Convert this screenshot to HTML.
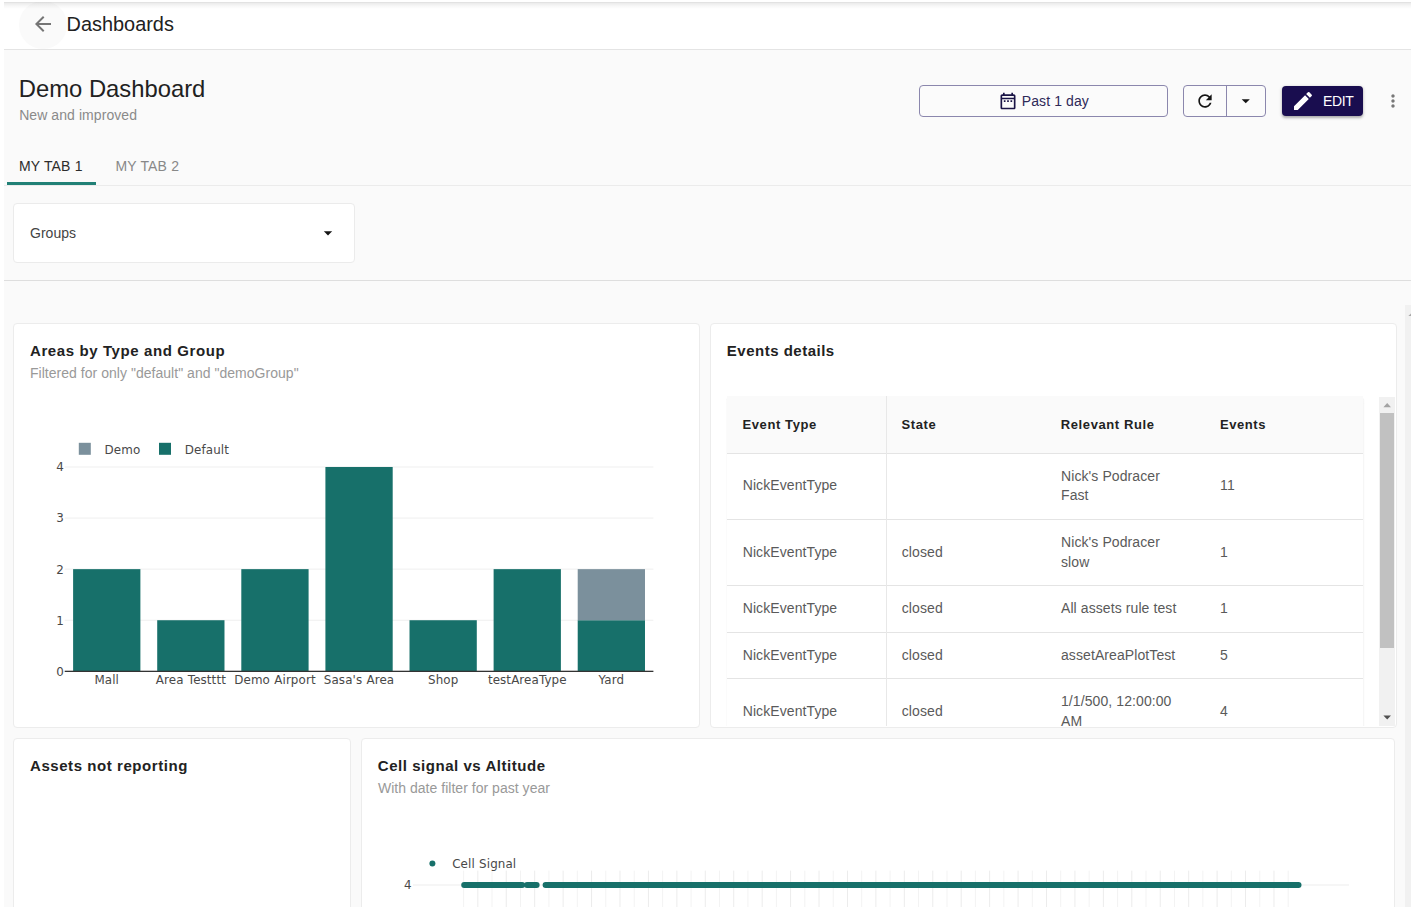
<!DOCTYPE html>
<html lang="en">
<head>
<meta charset="utf-8">
<title>Demo Dashboard</title>
<style>
html,body{margin:0;padding:0;background:#fff;}
body{width:1414px;height:913px;position:relative;overflow:hidden;font-family:"Liberation Sans",Arial,Helvetica,sans-serif;font-size:14px;color:#212121;}
.abs{position:absolute;}
.t{position:absolute;white-space:nowrap;line-height:20px;}
#page{position:absolute;left:4px;top:2px;width:1407px;height:905px;background:#fafafa;overflow:hidden;}
#hdr{position:absolute;left:0;top:0;width:1407px;height:46.6px;background:#fff;border-bottom:1px solid #e4e4e4;overflow:hidden;}
#hdr .shadow{position:absolute;left:0;top:0;width:100%;height:7px;background:linear-gradient(rgba(0,0,0,.137) 0px,rgba(0,0,0,.07) 1.5px,rgba(0,0,0,.03) 4px,rgba(0,0,0,0) 7px);}
.card{position:absolute;background:#fff;border:1px solid #ececec;border-radius:4px;box-sizing:border-box;}
.title{font-weight:700;font-size:15px;letter-spacing:.6px;color:#222;}
.sub{font-size:14px;letter-spacing:.03px;color:#999;}
.btn{position:absolute;box-sizing:border-box;border:1px solid #8b87ad;border-radius:4px;background:#fbfbfb;}
svg{position:absolute;overflow:visible;}
.chart text{font-family:"DejaVu Sans",Verdana,"Liberation Sans",sans-serif;font-size:11.9px;letter-spacing:.1px;word-spacing:.4px;fill:#484848;}

.th{font-weight:700;font-size:13px;letter-spacing:.6px;color:#222;}
.row{box-sizing:border-box;}
.hl{position:absolute;left:0;width:636.6px;height:1px;background:#e4e4e4;}
.td{position:absolute;top:0;display:flex;align-items:center;font-size:14px;line-height:19.8px;letter-spacing:.09px;color:#5a5a5a;}
</style>
</head>
<body>
<div id="page">
  <!-- top bar -->
  <div id="hdr">
    <div class="abs" style="left:14.5px;top:-1.5px;width:48px;height:48px;border-radius:50%;background:#fafafa;"></div>
    <div class="shadow"></div>
    <svg style="left:27px;top:10px" width="24" height="24" viewBox="0 0 24 24"><path d="M20 11H7.83l5.59-5.59L12 4l-8 8 8 8 1.41-1.41L7.83 13H20v-2z" fill="#757575"/></svg>
    <div class="t" style="left:62.6px;top:11.6px;font-size:19.9px;color:#212121;">Dashboards</div>
  </div>

  <!-- dashboard heading -->
  <div class="t" style="left:14.8px;top:72.5px;font-size:23.8px;line-height:28px;color:#212121;">Demo Dashboard</div>
  <div class="t" style="left:15.2px;top:102.7px;font-size:14px;letter-spacing:.07px;color:#8a8a8a;">New and improved</div>

  <!-- toolbar -->
  <div class="btn" style="left:915px;top:83px;width:249px;height:32px;"></div>
  <svg style="left:993.6px;top:88.8px" width="20" height="20" viewBox="0 0 24 24"><path fill="#1a1446" d="M19 4h-1V2h-2v2H8V2H6v2H5c-1.11 0-1.99.9-1.99 2L3 20c0 1.1.89 2 2 2h14c1.1 0 2-.9 2-2V6c0-1.1-.9-2-2-2zm0 16H5V10h14v10zm0-12H5V6h14v2zM7 11.2h2v2H7zm4 0h2v2h-2zm4 0h2v2h-2z"/></svg>
  <div class="t" style="left:1017.8px;top:89px;letter-spacing:.1px;color:#2e2958;">Past 1 day</div>

  <div class="btn" style="left:1179px;top:83px;width:83px;height:32px;"></div>
  <div class="abs" style="left:1221.5px;top:84px;width:1px;height:30px;background:#8b87ad;"></div>
  <svg style="left:1191.4px;top:89px" width="20" height="20" viewBox="0 0 24 24"><path fill="#151515" d="M17.65 6.35C16.2 4.9 14.21 4 12 4c-4.42 0-7.99 3.58-7.99 8s3.57 8 7.99 8c3.73 0 6.84-2.55 7.73-6h-2.08c-.82 2.33-3.04 4-5.65 4-3.31 0-6-2.69-6-6s2.69-6 6-6c1.66 0 3.14.69 4.22 1.78L13 11h7V4l-2.35 2.35z"/></svg>
  <svg style="left:1232.2px;top:88.9px" width="19.5" height="19.5" viewBox="0 0 24 24"><path fill="#151515" d="M7 10l5 5 5-5z"/></svg>

  <div class="abs" style="left:1277.7px;top:83.5px;width:81.8px;height:30.9px;border-radius:4px;background:#190d4f;box-shadow:0 1.5px 2.5px rgba(0,0,0,.25),0 1px 4px rgba(0,0,0,.12);"></div>
  <svg style="left:1287.4px;top:87px" width="24" height="24" viewBox="0 0 24 24"><path fill="#fff" d="M3 17.25V21h3.75L17.81 9.94l-3.75-3.75L3 17.25zM20.71 7.04c.39-.39.39-1.02 0-1.41l-2.34-2.34a.9959.9959 0 0 0-1.41 0l-1.83 1.83 3.75 3.75 1.83-1.83z"/></svg>
  <div class="t" style="left:1318.9px;top:89px;letter-spacing:-.35px;color:#fff;">EDIT</div>

  <svg style="left:1379px;top:89px" width="20" height="20" viewBox="0 0 24 24"><path fill="#777" d="M12 8c1.1 0 2-.9 2-2s-.9-2-2-2-2 .9-2 2 .9 2 2 2zm0 2c-1.100 0-2 .9-2 2s.9 2 2 2 2-.9 2-2-.9-2-2-2zm0 6c-1.100 0-2 .9-2 2s.9 2 2 2 2-.9 2-2-.9-2-2-2z"/></svg>

  <!-- tabs -->
  <div class="t" style="left:15px;top:154.2px;color:#2c2c2c;letter-spacing:.17px;">MY TAB 1</div>
  <div class="t" style="left:111.5px;top:154.2px;color:#888;letter-spacing:.17px;">MY TAB 2</div>
  <div class="abs" style="left:0;top:182.6px;width:1407px;height:1px;background:#ebebeb;"></div>
  <div class="abs" style="left:3px;top:180.3px;width:88.6px;height:2.6px;background:#218076;"></div>

  <!-- filters -->
  <div class="card" style="left:9px;top:201px;width:342.4px;height:59.5px;border-color:#ebebeb;"></div>
  <div class="t" style="left:26px;top:220.65px;letter-spacing:.03px;color:#444;">Groups</div>
  <svg style="left:314px;top:220.8px" width="20" height="20" viewBox="0 0 24 24"><path fill="#151515" d="M7 10l5 5 5-5z"/></svg>
  <div class="abs" style="left:0;top:278.4px;width:1407px;height:1px;background:#dedede;"></div>

  <!-- page scrollbar -->
  <div class="abs" style="left:1401px;top:303.3px;width:6px;height:602px;background:#f1f1f1;"></div>
  <svg style="left:1401px;top:303px" width="6" height="20" viewBox="0 0 6 20"><path d="M3.4 11.1 L6 8.4 L6 11.1Z" fill="#a8a8a8"/></svg>

  <!-- CARD 1 -->
  <div class="card" id="c1" style="left:9px;top:321px;width:687px;height:405px;"></div>
  
  <div class="t title" style="left:26px;top:339.2px;">Areas by Type and Group</div>
  <div class="t sub" style="left:26px;top:361.2px;">Filtered for only "default" and "demoGroup"</div>
  <svg class="chart" style="left:-4px;top:-2px" width="1414" height="913" viewBox="0 0 1414 913">
  <rect x="64.7" y="619.72" width="588.7" height="1" fill="#efefef"/>
  <rect x="64.7" y="568.64" width="588.7" height="1" fill="#efefef"/>
  <rect x="64.7" y="517.56" width="588.7" height="1" fill="#efefef"/>
  <rect x="64.7" y="466.48" width="588.7" height="1" fill="#efefef"/>
  <rect x="73.11" y="569.14" width="67.28" height="102.16" fill="#17706a"/>
  <text x="106.75" y="683.8" text-anchor="middle">Mall</text>
  <rect x="157.21" y="620.22" width="67.28" height="51.08" fill="#17706a"/>
  <text x="190.85" y="683.8" text-anchor="middle">Area Testttt</text>
  <rect x="241.31" y="569.14" width="67.28" height="102.16" fill="#17706a"/>
  <text x="274.95" y="683.8" text-anchor="middle">Demo Airport</text>
  <rect x="325.41" y="466.98" width="67.28" height="204.32" fill="#17706a"/>
  <text x="359.05" y="683.8" text-anchor="middle">Sasa&#39;s Area</text>
  <rect x="409.51" y="620.22" width="67.28" height="51.08" fill="#17706a"/>
  <text x="443.15" y="683.8" text-anchor="middle">Shop</text>
  <rect x="493.61" y="569.14" width="67.28" height="102.16" fill="#17706a"/>
  <text x="527.25" y="683.8" text-anchor="middle">testAreaType</text>
  <rect x="577.71" y="620.22" width="67.28" height="51.08" fill="#17706a"/>
  <rect x="577.71" y="569.14" width="67.28" height="51.08" fill="#7b909c"/>
  <text x="611.35" y="683.8" text-anchor="middle">Yard</text>
  <rect x="64.7" y="670.70" width="588.7" height="1.3" fill="#333"/>
  <text x="63.8" y="675.70" text-anchor="end">0</text>
  <text x="63.8" y="624.62" text-anchor="end">1</text>
  <text x="63.8" y="573.54" text-anchor="end">2</text>
  <text x="63.8" y="522.46" text-anchor="end">3</text>
  <text x="63.8" y="471.38" text-anchor="end">4</text>
  <rect x="78.8" y="442.8" width="12" height="12" fill="#7b909c"/>
  <text x="104.6" y="453.5">Demo</text>
  <rect x="159" y="442.8" width="12" height="12" fill="#17706a"/>
  <text x="184.8" y="453.5">Default</text>
  </svg>
  <!-- CARD 2 -->
  <div class="card" id="c2" style="left:706px;top:321px;width:687px;height:405px;"></div>
  <div class="t title" style="left:722.8px;top:339.2px;letter-spacing:.5px;">Events details</div>
  <div id="tblclip" class="abs" style="left:708px;top:388.4px;width:684px;height:336.0px;overflow:hidden;">
  <div id="tbl" class="abs" style="left:14.7px;top:6.0px;width:636.6px;height:400px;background:#fff;box-shadow:0 2px 1px -1px rgba(0,0,0,.18),0 1.5px 1px 0 rgba(0,0,0,.12),0 2px 3px -0.5px rgba(0,0,0,.12);">
  <div class="abs" style="left:0;top:0;width:636.6px;height:56.8px;background:#fafafa;"></div>
  <div class="t th" style="left:15.8px;top:18.2px;">Event Type</div>
  <div class="t th" style="left:174.9px;top:18.2px;">State</div>
  <div class="t th" style="left:334.1px;top:18.2px;">Relevant Rule</div>
  <div class="t th" style="left:493.2px;top:18.2px;">Events</div>
  <div class="abs row" style="left:0;top:56.6px;width:636.6px;height:66.8px;">
  <div class="td" style="left:16.0px;width:127.1px;height:66.8px;"><span>NickEventType</span></div>
  <div class="td" style="left:334.3px;width:127.1px;height:66.8px;"><span>Nick's Podracer<br>Fast</span></div>
  <div class="td" style="left:493.4px;width:127.1px;height:66.8px;"><span>11</span></div>
  </div>
  <div class="abs row" style="left:0;top:123.4px;width:636.6px;height:65.7px;">
  <div class="td" style="left:16.0px;width:127.1px;height:65.7px;"><span>NickEventType</span></div>
  <div class="td" style="left:175.1px;width:127.1px;height:65.7px;"><span>closed</span></div>
  <div class="td" style="left:334.3px;width:127.1px;height:65.7px;"><span>Nick's Podracer<br>slow</span></div>
  <div class="td" style="left:493.4px;width:127.1px;height:65.7px;"><span>1</span></div>
  </div>
  <div class="abs row" style="left:0;top:189.1px;width:636.6px;height:46.8px;">
  <div class="td" style="left:16.0px;width:127.1px;height:46.8px;"><span>NickEventType</span></div>
  <div class="td" style="left:175.1px;width:127.1px;height:46.8px;"><span>closed</span></div>
  <div class="td" style="left:334.3px;width:127.1px;height:46.8px;"><span>All assets rule test</span></div>
  <div class="td" style="left:493.4px;width:127.1px;height:46.8px;"><span>1</span></div>
  </div>
  <div class="abs row" style="left:0;top:235.9px;width:636.6px;height:46.3px;">
  <div class="td" style="left:16.0px;width:127.1px;height:46.3px;"><span>NickEventType</span></div>
  <div class="td" style="left:175.1px;width:127.1px;height:46.3px;"><span>closed</span></div>
  <div class="td" style="left:334.3px;width:127.1px;height:46.3px;"><span>assetAreaPlotTest</span></div>
  <div class="td" style="left:493.4px;width:127.1px;height:46.3px;"><span>5</span></div>
  </div>
  <div class="abs row" style="left:0;top:282.2px;width:636.6px;height:66.4px;">
  <div class="td" style="left:16.0px;width:127.1px;height:66.4px;"><span>NickEventType</span></div>
  <div class="td" style="left:175.1px;width:127.1px;height:66.4px;"><span>closed</span></div>
  <div class="td" style="left:334.3px;width:127.1px;height:66.4px;"><span>1/1/500, 12:00:00<br>AM</span></div>
  <div class="td" style="left:493.4px;width:127.1px;height:66.4px;"><span>4</span></div>
  </div>
  <div class="hl" style="top:56.5px;"></div>
  <div class="hl" style="top:122.4px;"></div>
  <div class="hl" style="top:188.9px;"></div>
  <div class="hl" style="top:235.4px;"></div>
  <div class="hl" style="top:281.7px;"></div>
  <div class="abs" style="left:158.9px;top:0;width:1px;height:400px;background:#e8e8e8;"></div>
  </div>
  <div class="abs" style="left:666.7px;top:6.6px;width:16.2px;height:340px;background:#f1f1f1;"></div>
  <div class="abs" style="left:668.3px;top:22.6px;width:13.6px;height:234.8px;background:#c1c1c1;"></div>
  <svg style="left:666.7px;top:6.6px" width="16" height="340" viewBox="0 0 16 340"><path d="M4.4 10.2 L8.2 6 L12 10.2Z" fill="#a3a3a3"/><path d="M4.4 318.4 L12 318.4 L8.2 322.6Z" fill="#505050"/></svg>
  </div>
  <!-- CARD 3 -->
  <div class="card" id="c3" style="left:9px;top:736px;width:337.8px;height:200px;"></div>
  <!-- CARD 4 -->
  <div class="card" id="c4" style="left:357px;top:736px;width:1034px;height:200px;"></div>

  <div class="t title" style="left:26px;top:753.9px;letter-spacing:.56px;">Assets not reporting</div>
  <div class="t title" style="left:373.8px;top:753.9px;letter-spacing:.54px;">Cell signal vs Altitude</div>
  <div class="t sub" style="left:373.9px;top:776.3px;">With date filter for past year</div>
  <svg class="chart" style="left:-4px;top:-2px" width="1414" height="913" viewBox="0 0 1414 913">
  <rect x="463.10" y="870.6" width="1" height="40" fill="#f3f3f3"/>
  <rect x="477.32" y="870.6" width="1" height="40" fill="#ececec"/>
  <rect x="491.53" y="870.6" width="1" height="40" fill="#f3f3f3"/>
  <rect x="505.75" y="870.6" width="1" height="40" fill="#ececec"/>
  <rect x="519.97" y="870.6" width="1" height="40" fill="#f3f3f3"/>
  <rect x="534.19" y="870.6" width="1" height="40" fill="#ececec"/>
  <rect x="548.40" y="870.6" width="1" height="40" fill="#f3f3f3"/>
  <rect x="562.62" y="870.6" width="1" height="40" fill="#ececec"/>
  <rect x="576.84" y="870.6" width="1" height="40" fill="#f3f3f3"/>
  <rect x="591.05" y="870.6" width="1" height="40" fill="#ececec"/>
  <rect x="605.27" y="870.6" width="1" height="40" fill="#f3f3f3"/>
  <rect x="619.49" y="870.6" width="1" height="40" fill="#ececec"/>
  <rect x="633.70" y="870.6" width="1" height="40" fill="#f3f3f3"/>
  <rect x="647.92" y="870.6" width="1" height="40" fill="#ececec"/>
  <rect x="662.14" y="870.6" width="1" height="40" fill="#f3f3f3"/>
  <rect x="676.36" y="870.6" width="1" height="40" fill="#ececec"/>
  <rect x="690.57" y="870.6" width="1" height="40" fill="#f3f3f3"/>
  <rect x="704.79" y="870.6" width="1" height="40" fill="#ececec"/>
  <rect x="719.01" y="870.6" width="1" height="40" fill="#f3f3f3"/>
  <rect x="733.22" y="870.6" width="1" height="40" fill="#ececec"/>
  <rect x="747.44" y="870.6" width="1" height="40" fill="#f3f3f3"/>
  <rect x="761.66" y="870.6" width="1" height="40" fill="#ececec"/>
  <rect x="775.87" y="870.6" width="1" height="40" fill="#f3f3f3"/>
  <rect x="790.09" y="870.6" width="1" height="40" fill="#ececec"/>
  <rect x="804.31" y="870.6" width="1" height="40" fill="#f3f3f3"/>
  <rect x="818.53" y="870.6" width="1" height="40" fill="#ececec"/>
  <rect x="832.74" y="870.6" width="1" height="40" fill="#f3f3f3"/>
  <rect x="846.96" y="870.6" width="1" height="40" fill="#ececec"/>
  <rect x="861.18" y="870.6" width="1" height="40" fill="#f3f3f3"/>
  <rect x="875.39" y="870.6" width="1" height="40" fill="#ececec"/>
  <rect x="889.61" y="870.6" width="1" height="40" fill="#f3f3f3"/>
  <rect x="903.83" y="870.6" width="1" height="40" fill="#ececec"/>
  <rect x="918.04" y="870.6" width="1" height="40" fill="#f3f3f3"/>
  <rect x="932.26" y="870.6" width="1" height="40" fill="#ececec"/>
  <rect x="946.48" y="870.6" width="1" height="40" fill="#f3f3f3"/>
  <rect x="960.70" y="870.6" width="1" height="40" fill="#ececec"/>
  <rect x="974.91" y="870.6" width="1" height="40" fill="#f3f3f3"/>
  <rect x="989.13" y="870.6" width="1" height="40" fill="#ececec"/>
  <rect x="1003.35" y="870.6" width="1" height="40" fill="#f3f3f3"/>
  <rect x="1017.56" y="870.6" width="1" height="40" fill="#ececec"/>
  <rect x="1031.78" y="870.6" width="1" height="40" fill="#f3f3f3"/>
  <rect x="1046.00" y="870.6" width="1" height="40" fill="#ececec"/>
  <rect x="1060.21" y="870.6" width="1" height="40" fill="#f3f3f3"/>
  <rect x="1074.43" y="870.6" width="1" height="40" fill="#ececec"/>
  <rect x="1088.65" y="870.6" width="1" height="40" fill="#f3f3f3"/>
  <rect x="1102.87" y="870.6" width="1" height="40" fill="#ececec"/>
  <rect x="1117.08" y="870.6" width="1" height="40" fill="#f3f3f3"/>
  <rect x="1131.30" y="870.6" width="1" height="40" fill="#ececec"/>
  <rect x="1145.52" y="870.6" width="1" height="40" fill="#f3f3f3"/>
  <rect x="1159.73" y="870.6" width="1" height="40" fill="#ececec"/>
  <rect x="1173.95" y="870.6" width="1" height="40" fill="#f3f3f3"/>
  <rect x="1188.17" y="870.6" width="1" height="40" fill="#ececec"/>
  <rect x="1202.38" y="870.6" width="1" height="40" fill="#f3f3f3"/>
  <rect x="1216.60" y="870.6" width="1" height="40" fill="#ececec"/>
  <rect x="1230.82" y="870.6" width="1" height="40" fill="#f3f3f3"/>
  <rect x="1245.04" y="870.6" width="1" height="40" fill="#ececec"/>
  <rect x="1259.25" y="870.6" width="1" height="40" fill="#f3f3f3"/>
  <rect x="1273.47" y="870.6" width="1" height="40" fill="#ececec"/>
  <rect x="1287.69" y="870.6" width="1" height="40" fill="#f3f3f3"/>
  <rect x="413" y="884.5" width="936" height="1" fill="#eee"/>
  <line x1="464.2" y1="885" x2="522.2" y2="885" stroke="#17706a" stroke-width="6" stroke-linecap="round"/>
  <line x1="527" y1="885" x2="536.6" y2="885" stroke="#17706a" stroke-width="6" stroke-linecap="round"/>
  <line x1="545.6" y1="885" x2="1298.5" y2="885" stroke="#17706a" stroke-width="6" stroke-linecap="round"/>
  <circle cx="432.4" cy="863.4" r="3" fill="#17706a"/>
  <text x="452.2" y="868.1" letter-spacing=".2">Cell Signal</text>
  <text x="411.6" y="889.4" text-anchor="end">4</text>
  </svg>
</div>
</body>
</html>
